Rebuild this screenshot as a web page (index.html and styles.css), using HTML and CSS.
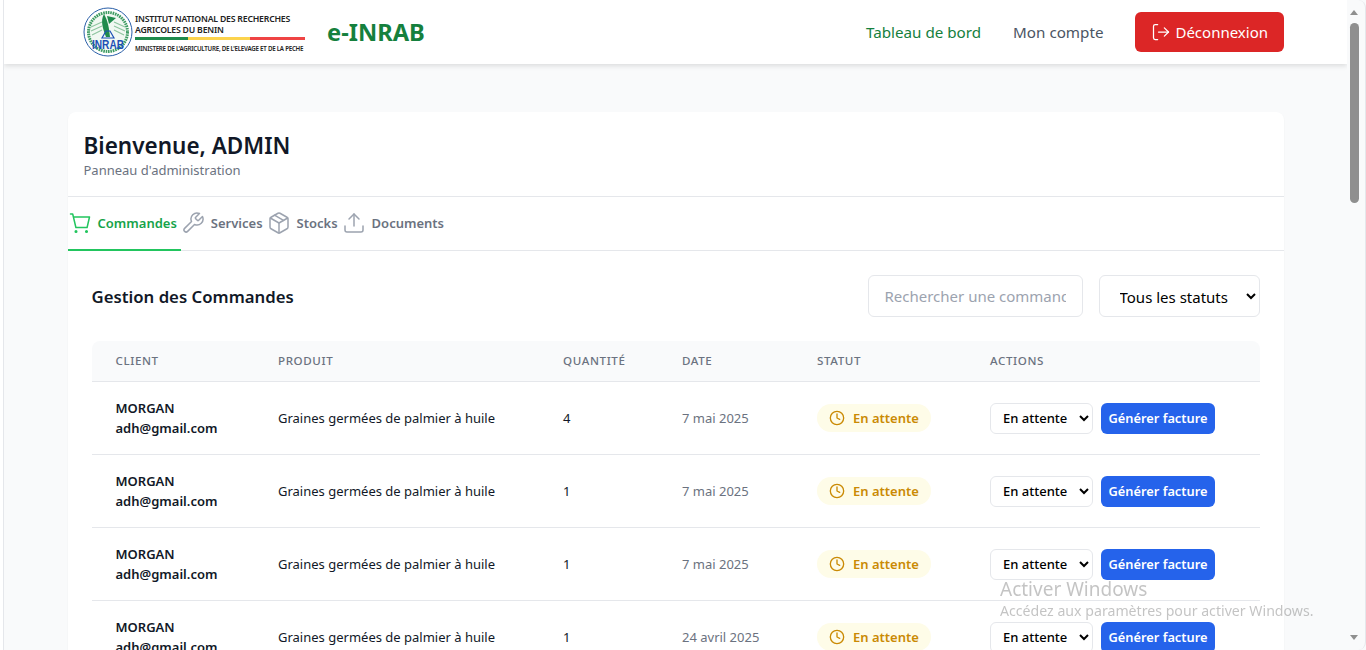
FILE: index.html
```html
<!DOCTYPE html>
<html lang="fr">

<head>
  <meta charset="UTF-8" />
  <meta name="viewport" content="width=device-width, initial-scale=1.0" />
  <title>e-INRAB</title>
  <link rel="stylesheet" href="styles.css">
</head>

<body>
  <div id="page">
    <header id="topbar">
      <div class="brand">
        <div class="logo">
          <svg class="logo-seal" viewBox="0 0 50 50" width="50" height="50">
            <circle cx="25" cy="25" r="24" fill="#fff" stroke="#2a5fa8" stroke-width="1" />
            <circle cx="25" cy="25" r="19.5" fill="#f1f8f2" stroke="#3f9c63" stroke-width="3" stroke-dasharray="1.6 0.8" />
            <path d="M8 24 L19 19 M8 20 L19 15 M9 28 L19 23 M42 24 L31 19 M42 20 L31 15 M41 28 L31 23" stroke="#8fc5a0" stroke-width="1.2" />
            <path d="M21 7 C17 14 20 22 23 30 L27 30 C26 21 25 14 21 7 Z" fill="#1f8a4c" />
            <path d="M24 9 L33 11 L26 17 Z" fill="#1f8a4c" />
            <path d="M23 24 L27 24 L31 31 L19 31 Z" fill="none" stroke="#1c4fb5" stroke-width="1.2" />
            <text x="25" y="42" text-anchor="middle" textLength="32" lengthAdjust="spacingAndGlyphs" class="seal-text">INRAB</text>
          </svg>
          <div class="logo-text">
            <div class="logo-name">INSTITUT NATIONAL DES RECHERCHES</div>
            <div class="logo-name">AGRICOLES DU BENIN</div>
            <div class="logo-flag"><span class="flag-green"></span><span class="flag-yellow"></span><span class="flag-red"></span></div>
            <div class="logo-sub">MINISTERE DE L'AGRICULTURE, DE L'ELEVAGE ET DE LA PECHE</div>
          </div>
        </div>
        <span class="brand-name">e-INRAB</span>
      </div>
      <nav class="topnav">
        <a href="#" class="current">Tableau de bord</a>
        <a href="#">Mon compte</a>
        <button class="logout">
          <svg viewBox="0 0 24 24" width="20" height="20" class="icon"><path d="M8 3H5a2 2 0 0 0-2 2v14a2 2 0 0 0 2 2h3" /><path d="M9 12h12" /><path d="M16 7l5 5-5 5" /></svg>
          Déconnexion
        </button>
      </nav>
    </header>

    <main id="content">
      <section class="panel">
        <div class="panel-head">
          <h1>Bienvenue, ADMIN</h1>
          <p>Panneau d'administration</p>
        </div>
        <div class="tabs">
          <a href="#" class="tab active">
            <svg viewBox="0 0 24 24" width="24" height="24" class="icon"><circle cx="8" cy="20.5" r="0.8" /><circle cx="18.5" cy="20.5" r="0.8" /><path d="M2.5 3h2.2l3.2 13.5h11.2l2.4-10.5H5.5" /></svg>
            Commandes
          </a>
          <a href="#" class="tab">
            <svg viewBox="0 0 24 24" width="24" height="24" class="icon"><path d="M14.7 6.3a1 1 0 0 0 0 1.4l1.6 1.6a1 1 0 0 0 1.4 0l3.77-3.77a6 6 0 0 1-7.94 7.94l-6.91 6.91a2.12 2.12 0 0 1-3-3l6.91-6.91a6 6 0 0 1 7.94-7.94l-3.76 3.76z" /></svg>
            Services
          </a>
          <a href="#" class="tab">
            <svg viewBox="0 0 24 24" width="24" height="24" class="icon"><path d="M21 16V8a2 2 0 0 0-1-1.73l-7-4a2 2 0 0 0-2 0l-7 4A2 2 0 0 0 3 8v8a2 2 0 0 0 1 1.73l7 4a2 2 0 0 0 2 0l7-4A2 2 0 0 0 21 16z" /><path d="M3.3 7L12 12l8.7-5" /><path d="M12 22V12" /><path d="M7.5 4.2l9 5.2" /></svg>
            Stocks
          </a>
          <a href="#" class="tab">
            <svg viewBox="0 0 24 24" width="24" height="24" class="icon"><path d="M21 15v4a2 2 0 0 1-2 2H5a2 2 0 0 1-2-2v-4" /><path d="M17 8l-5-5-5 5" /><path d="M12 3v12" /></svg>
            Documents
          </a>
        </div>

        <div class="orders">
          <div class="orders-head">
            <h2>Gestion des Commandes</h2>
            <div class="filters">
              <input type="text" placeholder="Rechercher une commande" />
              <select>
                <option>Tous les statuts</option>
              </select>
            </div>
          </div>

          <div class="table-wrap">
            <table>
              <thead>
                <tr>
                  <th class="col-client">Client</th>
                  <th class="col-product">Produit</th>
                  <th class="col-qty">Quantité</th>
                  <th class="col-date">Date</th>
                  <th class="col-status">Statut</th>
                  <th>Actions</th>
                </tr>
              </thead>
              <tbody id="rows"></tbody>
            </table>
          </div>
        </div>
      </section>
    </main>
  </div>

  <div class="scrollbar">
    <span class="arrow-up"></span>
    <span class="thumb"></span>
    <span class="arrow-down"></span>
  </div>

  <div class="watermark">
    <div class="wm-title">Activer Windows</div>
    <div class="wm-sub">Accédez aux paramètres pour activer Windows.</div>
  </div>

  <script>
    const orders = [
      { qty: 4, date: "7 mai 2025" },
      { qty: 1, date: "7 mai 2025" },
      { qty: 1, date: "7 mai 2025" },
      { qty: 1, date: "24 avril 2025" },
    ];

    document.getElementById("rows").innerHTML = orders
      .map(
        (order) => `
        <tr>
          <td class="client">MORGAN<br />adh@gmail.com</td>
          <td>Graines germées de palmier à huile</td>
          <td>${order.qty}</td>
          <td class="date">${order.date}</td>
          <td>
            <span class="badge">
              <svg viewBox="0 0 24 24" width="16" height="16" class="icon"><circle cx="12" cy="12" r="10" /><path d="M12 6v6l4 2" /></svg>
              En attente
            </span>
          </td>
          <td>
            <div class="actions">
              <select><option>En attente</option></select>
              <button>Générer facture</button>
            </div>
          </td>
        </tr>`
      )
      .join("");
  </script>
</body>

</html>
```

FILE: styles.css
```css
* {
  box-sizing: border-box;
}

html,
body {
  height: 650px;
  overflow: hidden;
}

html {
  background-color: #fff;
}

body {
  margin: 0 0 0 3px;
  font-family: "Noto Sans", sans-serif;
  background-color: #f9fafb;
  color: #111827;
  border-left: 1px solid #e5e7eb;
  padding-right: 19px;
}

.icon {
  fill: none;
  stroke: currentColor;
  stroke-width: 1.5;
  stroke-linecap: round;
  stroke-linejoin: round;
  flex-shrink: 0;
}

#topbar {
  height: 64px;
  padding: 0 63px 0 79px;
  background-color: #fff;
  box-shadow: 0 2px 5px rgba(0, 0, 0, 0.12);
  display: flex;
  align-items: center;
  justify-content: space-between;
}

.brand {
  display: flex;
  align-items: center;
  gap: 22px;
}

.logo {
  display: flex;
  align-items: center;
  gap: 2px;
}

.seal-text {
  font-family: "Liberation Sans", sans-serif;
  font-size: 12px;
  font-weight: 700;
  fill: #1c4fb5;
}

.logo-text {
  width: 170px;
  padding-top: 2px;
  color: #222;
}

.logo-name {
  font-size: 8.7px;
  line-height: 11px;
  font-weight: 600;
  letter-spacing: -0.2px;
  white-space: nowrap;
}

.logo-flag {
  display: flex;
  height: 3px;
  margin: 1px 0 5px;
}

.flag-green {
  width: 53px;
  background-color: #1f8a4c;
}

.flag-yellow {
  width: 62px;
  background-color: #fcd34d;
}

.flag-red {
  flex: 1;
  background-color: #ef4444;
}

.logo-sub {
  font-size: 6.2px;
  line-height: 8px;
  font-weight: 600;
  letter-spacing: -0.25px;
  white-space: nowrap;
}

.brand-name {
  font-size: 23.7px;
  font-weight: 700;
  color: #15803d;
}

.topnav {
  display: flex;
  align-items: center;
  gap: 32px;
}

.topnav a {
  font-size: 15.2px;
  color: #4b5563;
  text-decoration: none;
}

.topnav a.current {
  color: #15803d;
}

.logout {
  height: 40px;
  padding: 0 16px;
  display: flex;
  align-items: center;
  gap: 4px;
  font-family: inherit;
  font-size: 15px;
  color: #fff;
  background-color: #dc2626;
  border: none;
  border-radius: 6px;
}

#content {
  padding: 48px 63.5px 0 63.5px;
}

.panel {
  background-color: #fff;
  border-radius: 8px;
  box-shadow: 0 1px 2px rgba(0, 0, 0, 0.05);
}

.panel-head {
  height: 85px;
  padding: 20px 16px 0;
  border-bottom: 1px solid #e5e7eb;
}

h1 {
  margin: 0;
  font-size: 22.5px;
  line-height: 28px;
  font-weight: 600;
}

.panel-head p {
  margin: 0;
  font-size: 13px;
  line-height: 20px;
  color: #6b7280;
}

.tabs {
  height: 54px;
  display: flex;
  border-bottom: 1px solid #e5e7eb;
}

.tab {
  height: 54px;
  padding: 0 4px 0 0.5px;
  display: flex;
  align-items: center;
  gap: 5.5px;
  font-size: 13px;
  font-weight: 600;
  color: #6b7280;
  text-decoration: none;
  border-bottom: 2px solid transparent;
}

.tab .icon {
  color: #9ca3af;
}

.tab.active {
  color: #16a34a;
  border-bottom-color: #22c55e;
}

.tab.active .icon {
  color: #22c55e;
}

.orders {
  padding: 24px;
}

.orders-head {
  display: flex;
  align-items: center;
  justify-content: space-between;
  margin-bottom: 24px;
}

h2 {
  margin: 0;
  font-size: 16.75px;
  font-weight: 600;
}

.filters {
  display: flex;
  gap: 16px;
}

.filters input,
.filters select {
  height: 42px;
  font-family: inherit;
  font-size: 15px;
  border: 1px solid #e5e7eb;
  border-radius: 6px;
  background-color: #fff;
}

.filters input {
  width: 215px;
  padding: 0 16px;
}

.filters input::placeholder {
  color: #9ca3af;
}

.filters select {
  width: 161px;
  padding: 1px 12px 0 16px;
  color: #000;
}

.table-wrap {
  border-radius: 8px;
  overflow: hidden;
}

table {
  width: 100%;
  border-collapse: collapse;
  table-layout: fixed;
}

thead {
  background-color: #f9fafb;
}

th {
  height: 40px;
  padding: 0 24px;
  font-size: 11.6px;
  font-weight: 500;
  letter-spacing: 0.6px;
  text-align: left;
  text-transform: uppercase;
  color: #6b7280;
  border-bottom: 1px solid #e5e7eb;
}

.col-client { width: 162.5px; }
.col-product { width: 285px; }
.col-qty { width: 119px; }
.col-date { width: 135px; }
.col-status { width: 173px; }

td {
  height: 73px;
  padding: 0 24px;
  font-size: 13px;
  color: #111827;
  border-bottom: 1px solid #e5e7eb;
  white-space: nowrap;
}

td.client {
  line-height: 20px;
  font-weight: 600;
}

td.date {
  color: #6b7280;
}

.badge {
  display: inline-flex;
  align-items: center;
  gap: 8px;
  height: 28px;
  padding: 0 12px;
  font-weight: 600;
  color: #ca8a04;
  background-color: #fefce8;
  border-radius: 14px;
}

.badge .icon {
  stroke-width: 2;
}

.actions {
  display: flex;
  align-items: center;
  gap: 8px;
  padding-top: 1px;
}

.actions select {
  width: 103px;
  height: 31px;
  padding: 0 0 0 8px;
  font-family: inherit;
  font-size: 13px;
  font-weight: 500;
  color: #000;
  background-color: #fff;
  border: 1px solid #e5e7eb;
  border-radius: 6px;
}

.actions button {
  height: 31px;
  width: 114px;
  padding: 0;
  font-family: inherit;
  font-size: 12.8px;
  font-weight: 600;
  color: #fff;
  background-color: #2563eb;
  border: none;
  border-radius: 6px;
}

/* window chrome that was in the capture */
.scrollbar {
  position: fixed;
  top: 0;
  right: 0;
  bottom: 0;
  width: 19px;
  background-color: #f9fafb;
  border-right: 1px solid #e5e7eb;
  border-radius: 0 8px 8px 0;
}

.thumb {
  position: absolute;
  top: 23px;
  left: 3px;
  width: 9px;
  height: 180px;
  background-color: #8f8f8f;
  border-radius: 5px;
}

.arrow-up {
  position: absolute;
  top: 10px;
  left: 3px;
  border: 4.5px solid transparent;
  border-top: 0;
  border-bottom: 5px solid #8f8f8f;
}

.arrow-down {
  position: absolute;
  bottom: 10px;
  left: 3px;
  border: 4.5px solid transparent;
  border-bottom: 0;
  border-top: 5px solid #8f8f8f;
}

.watermark {
  position: fixed;
  left: 1000px;
  top: 577px;
  color: rgba(100, 100, 100, 0.38);
  pointer-events: none;
}

.wm-title {
  font-size: 19px;
  line-height: 24px;
}

.wm-sub {
  font-size: 14.15px;
  line-height: 20px;
  margin-top: 0;
}
```
